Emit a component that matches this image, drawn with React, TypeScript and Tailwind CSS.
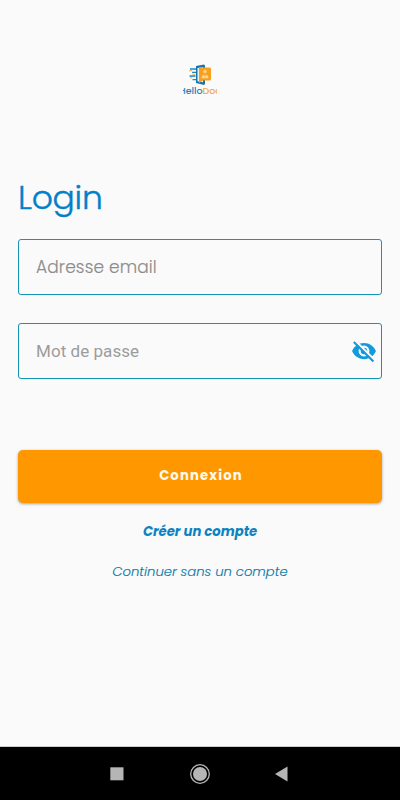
import React from "react";

function Logo() {
  return (
    <div className="flex h-[34px] w-[34px] flex-col items-center overflow-hidden">
      <svg className="mt-[1px] shrink-0" width="34" height="22" viewBox="0 0 34 22">
        <path d="M7 5h7M9 8.4h5M6.5 12h6M9.5 15.6h5" stroke="#1b86c4" strokeWidth="1.3" />
        <path d="M6 6.7h3M9.5 10.2h3M7 13.8h2" stroke="#f6a831" strokeWidth="0.9" />
        <path d="M13 2l8-1.5 1 1V20l-1 1-8-2z" fill="#1874ad" />
        <path d="M14.5 4l5.5-.7v15l-5.5-1z" fill="#e8f4fa" />
        <path d="M16 3.5h10.5q1.5 0 1.5 1.5v10q0 1.5-1.5 1.5H20l-4 2.5z" fill="#f8a01c" />
        <circle cx="22" cy="7.5" r="1.7" fill="#ffd58a" />
        <path d="M18.5 14.3c.2-5.5 6.8-5.5 7 0z" fill="#ffd58a" />
        <path d="M21 10.2l1 1.8 1-1.8" stroke="#ef9821" strokeWidth=".8" fill="none" />
      </svg>
      <div className="shrink-0 whitespace-nowrap text-[9.5px] leading-[10px] font-medium text-[#2783b8]">
        Hello<span className="text-[#f3aa45]">Doc</span>
      </div>
    </div>
  );
}

export default function App() {
  return (
    <div className="flex h-[800px] w-[400px] flex-col overflow-hidden bg-[#fafafa] font-['Poppins','Inter',sans-serif]">
      <main className="flex flex-1 flex-col px-[18px] pt-[63px]">
        <div className="flex justify-center">
          <Logo />
        </div>
        <h1 className="mt-[77px] h-[48px] text-[33px] leading-[48px] font-light tracking-[-0.25px] text-[#0080c8] [-webkit-text-stroke:0.4px_#0080c8]">
          Login
        </h1>
        <div className="mt-[17px] flex h-[56px] items-center rounded-[3px] border border-[#1594b5] px-[17px] pt-[2px]">
          <span className="text-[17px] font-light tracking-[0.14px] text-[#8c8c8c] [-webkit-text-stroke:0.15px_#8c8c8c]">Adresse email</span>
        </div>
        <div className="mt-[28px] flex h-[56px] items-center justify-between rounded-[3px] border border-[#1594b5] pr-[4px] pl-[17px]">
          <span className="pt-[2px] font-['Roboto',sans-serif] text-[17px] tracking-[0.05px] text-[#9c9c9c]">Mot de passe</span>
          <svg width="26" height="26" viewBox="0 0 24 24" fill="#119bdc">
            <path d="M12 4.5C7 4.5 2.73 7.61 1 12c1.73 4.39 6 7.5 11 7.5s9.27-3.11 11-7.5c-1.73-4.39-6-7.5-11-7.5zM12 17a5 5 0 1 1 0-10 5 5 0 0 1 0 10zm0-8a3 3 0 1 0 0 6 3 3 0 0 0 0-6z" />
            <path d="M3.6 2.2L21.8 20.4" stroke="#fafafa" strokeWidth="2" />
            <path d="M2.6 3.6L20.7 21.7" stroke="#119bdc" strokeWidth="2" />
          </svg>
        </div>
        <button className="mt-[71px] h-[53px] rounded-[5px] bg-[#ff9800] pb-[2px] pl-[2px] text-[13.2px] font-bold tracking-[1.15px] text-[#fffaf0] shadow-[0_1px_3px_rgba(0,0,0,0.35)]">
          Connexion
        </button>
        <a className="mt-[19px] text-center text-[13.2px] leading-[20px] font-bold text-[#0c83c0] italic">
          Créer un compte
        </a>
        <a className="mt-[20px] text-center text-[13.2px] leading-[20px] font-light text-[#0b76a2] italic [-webkit-text-stroke:0.15px_#0b86b8]">
          Continuer sans un compte
        </a>
      </main>
      <nav className="flex h-[54px] shrink-0 items-center border-t border-[#cccccc] bg-black pl-[110px]">
        <svg width="14" height="14" viewBox="0 0 14 14">
          <path d="M.3 .3h13.2v13H.3z" fill="#b5b5b5" />
        </svg>
        <svg className="ml-[66px]" width="20" height="20" viewBox="0 0 20 20">
          <circle cx="10" cy="10" r="9.3" fill="none" stroke="#b5b5b5" strokeWidth="1.3" />
          <circle cx="10" cy="10" r="7" fill="#b5b5b5" />
        </svg>
        <svg className="ml-[65px]" width="13" height="16" viewBox="0 0 13 16">
          <path d="M0 8L12.5.5v15z" fill="#b5b5b5" />
        </svg>
      </nav>
    </div>
  );
}
